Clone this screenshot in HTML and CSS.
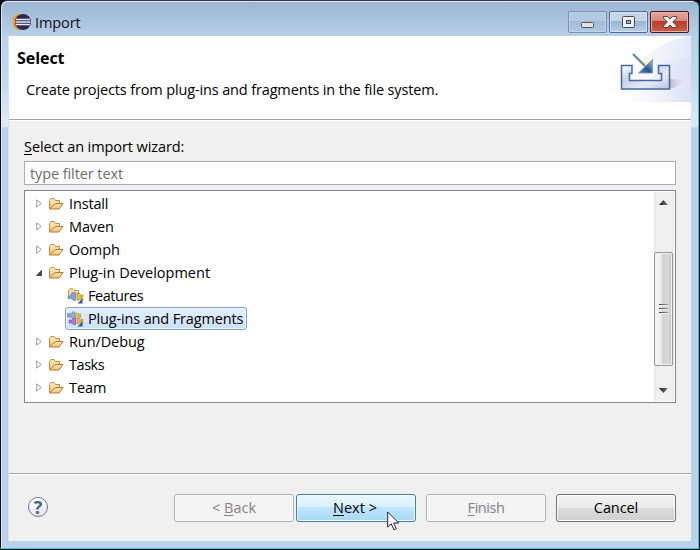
FILE: index.html
```
<!DOCTYPE html>
<html lang="en">
<head>
<meta charset="utf-8">
<title>Import</title>
<link rel="stylesheet" href="styles.css">
</head>
<body>
<svg class="defs" width="0" height="0" aria-hidden="true">
  <defs>
    <linearGradient id="gold" x1="0" y1="0" x2="0" y2="1"><stop offset="0" stop-color="#ffeec0"/><stop offset="1" stop-color="#eec173"/></linearGradient>
    <linearGradient id="paleBlue" x1="0" y1="0" x2="1" y2="0"><stop offset="0" stop-color="#fff"/><stop offset=".4" stop-color="#f8f9fd"/><stop offset="1" stop-color="#e2e8f7"/></linearGradient>
    <linearGradient id="paleBlue2" x1="0" y1="0" x2="1" y2="0"><stop offset="0" stop-color="#fff" stop-opacity="0"/><stop offset="1" stop-color="#d6def4"/></linearGradient>
    <linearGradient id="tray" x1="0" y1="0" x2="1" y2="1"><stop offset="0" stop-color="#fff"/><stop offset=".35" stop-color="#c8d2e8"/><stop offset=".65" stop-color="#e6eaf5"/><stop offset="1" stop-color="#b8c4df"/></linearGradient>
    <linearGradient id="shadow" x1="0" y1="0" x2="1" y2="0"><stop offset="0" stop-color="#c5b5cb"/><stop offset="1" stop-color="#dfe3f4" stop-opacity="0"/></linearGradient>
    <radialGradient id="glow"><stop offset="0" stop-color="#fff3a8"/><stop offset="1" stop-color="#fffbe0" stop-opacity=".2"/></radialGradient>
    <linearGradient id="head" x1="0" y1="1" x2="1" y2="0"><stop offset="0" stop-color="#5f86bd"/><stop offset=".45" stop-color="#2c5390"/><stop offset="1" stop-color="#a9c2e2"/></linearGradient>
    <linearGradient id="dark" x1="0" y1="0" x2="1" y2="0"><stop offset="0" stop-color="#111"/><stop offset="1" stop-color="#888"/></linearGradient>
    <symbol id="folder" viewBox="0 0 16 14">
      <path d="M1.500 11.500V3.500L3 1.500H6L7.500 3.500H11.500V6.500" fill="url(#gold)" stroke="#c48a3d"/>
      <path d="M1.500 12L5.500 8L8 6.500H15L11 12Z" fill="url(#gold)" stroke="#b9792d" stroke-linejoin="round"/>
    </symbol>
    <symbol id="closed" viewBox="0 0 6 9"><path d="M.7 .9L5.200 4.500L.7 8.100Z" fill="#fff" stroke="#999"/></symbol>
    <symbol id="open" viewBox="0 0 6 6"><path d="M5.700 .3V5.700H.3Z" fill="#444" stroke="#222" stroke-width=".6"/></symbol>
  </defs>
</svg>
<div class="window">
  <header class="titlebar">
    <svg class="logo" width="18" height="18" viewBox="0 0 18 18"><path d="M7 .8A8.200 8.200 0 0 0 7 17.200L9 15V3Z" fill="#f29a24"/><circle cx="10" cy="9" r="8" fill="#2d2757"/><path d="M3 6.500H17M2.500 9H17.500M3 11.500H17" stroke="#e9e9f4" stroke-width="1.500"/></svg>
    <span class="title">Import</span>
    <div class="controls">
      <div class="ctl minimize"><svg width="37" height="20"><rect x="12.500" y="10.500" width="12" height="5" rx="1" fill="#e3e3e3" stroke="#53575e"/></svg></div>
      <div class="ctl"><svg width="37" height="20"><rect x="12.500" y="4.500" width="12" height="11" rx="1" fill="#eee" stroke="#454b57"/><rect x="16.500" y="8.500" width="4" height="3" fill="#91a9c8" stroke="#454b57"/></svg></div>
      <div class="ctl close"><svg width="37" height="20"><path d="M12.500 4.500H16.500L19 7L21.500 4.500H25.500V6L21.800 10L25.500 14V15.500H21.500L19 13L16.500 15.500H12.500V14L16.200 10L12.500 6Z" fill="#f0f0f0" stroke="#54464b"/></svg></div>
    </div>
  </header>
  <main class="client">
    <section class="banner">
      <div class="copy">
        <h1>Select</h1>
        <p>Create projects from plug-ins and fragments in the file system.</p>
      </div>
      <svg class="art" width="75" height="66" viewBox="0 0 75 66">
        <path d="M0 66C13 31 37 5 75 0V66Z" fill="url(#paleBlue)"/>
        <path d="M0 66C20 38 49 22 75 21V66Z" fill="url(#paleBlue2)" opacity=".6"/>
        <circle cx="29" cy="28" r="8" fill="url(#glow)"/>
        <path d="M54 43L71 44L60 51L54 53Z" fill="url(#shadow)"/>
        <path d="M5.500 29.500H16V37.500H13.500V44.500H45.500V37.500H42.500V29.500H53.500V53H5.500Z" fill="url(#tray)" stroke="#4169a5" stroke-width="1.500"/>
        <path d="M17 18L29 30" stroke="#6585b6" stroke-width="2.200"/>
        <path d="M36.500 23.500V37H22.500Z" fill="url(#head)" stroke="#6f90c2" stroke-width=".8"/>
      </svg>
    </section>
    <section class="body">
      <label class="prompt"><u>S</u>elect an import wizard:</label>
      <div class="filter">type filter text</div>
      <div class="tree">
        <div class="rows">
          <div class="row"><svg class="arrow"><use href="#closed"/></svg><svg class="folder"><use href="#folder"/></svg><span class="snug">Install</span></div>
          <div class="row"><svg class="arrow"><use href="#closed"/></svg><svg class="folder"><use href="#folder"/></svg><span class="snug">Maven</span></div>
          <div class="row"><svg class="arrow"><use href="#closed"/></svg><svg class="folder"><use href="#folder"/></svg><span>Oomph</span></div>
          <div class="row"><svg class="arrow expanded"><use href="#open"/></svg><svg class="folder"><use href="#folder"/></svg><span class="wide">Plug-in Development</span></div>
          <div class="row child"><svg class="item" width="17" height="16" viewBox="0 0 17 16"><path d="M1.500 9.500V2.500L3 .7H5.500L7 2.500H11.500V7" fill="#f8dda1" stroke="#d09a50"/><path d="M1 8H4V6L6 4.500H8.500V12.500H7L4 10.500H1Z" fill="#7fa6d5" stroke="#5a81b8" stroke-width=".7"/><path d="M10 5.500H12.500L14 7H16V8.500H14V10H16V11.500H13L10 12.500Z" fill="#e8c03e" stroke="#a88328" stroke-width=".7"/><path d="M15.500 10.500V15.500H10.500Z" fill="#235b9d"/></svg><span class="tight">Features</span></div>
          <div class="row child"><div class="selected"><svg class="item" width="17" height="16" viewBox="0 0 17 16"><path d="M0 2.800H3.500L5.500 1H7.500V7.500H5.500L3.500 6H0V5H3V4H0Z" fill="#8badd8" stroke="#5b7eae" stroke-width=".6"/><path d="M8.500 2H10.500L12 3H14V4H12V5.300H14V6.300H11L8.500 7Z" fill="#edc345" stroke="#b28a21" stroke-width=".6"/><path d="M2 9H5L6.500 7.500H8.500V13.500H6.500L5 12H2V11H4V10H2Z" fill="#b179d2" stroke="#8b48ad" stroke-width=".7"/><path d="M10 7.500H13L14 8.500H16V9.500H14V11H16V12H12.500L10 13Z" fill="#e9bc3b" stroke="#a88328" stroke-width=".6"/><path d="M15.500 10.500V15.500H10.500Z" fill="#235b9d"/></svg><span class="snug">Plug-ins and Fragments</span></div></div>
          <div class="row"><svg class="arrow"><use href="#closed"/></svg><svg class="folder"><use href="#folder"/></svg><span>Run/Debug</span></div>
          <div class="row"><svg class="arrow"><use href="#closed"/></svg><svg class="folder"><use href="#folder"/></svg><span class="tight">Tasks</span></div>
          <div class="row"><svg class="arrow"><use href="#closed"/></svg><svg class="folder"><use href="#folder"/></svg><span>Team</span></div>
        </div>
        <div class="scrollbar">
          <svg width="9" height="5"><path d="M0 5L4.500 0L9 5Z" fill="url(#dark)"/></svg>
          <div class="thumb"><i></i><i></i><i></i></div>
          <svg width="9" height="5"><path d="M0 0L4.500 5L9 0Z" fill="url(#dark)"/></svg>
        </div>
      </div>
    </section>
    <footer class="actions">
      <div class="help">?</div>
      <div class="btn disabled"><span class="wide">&lt; <u>B</u>ack</span></div>
      <div class="btn next"><span class="wide"><u>N</u>ext &gt;</span>
        <svg class="cursor" width="13" height="20" viewBox="0 0 13 20"><path d="M.7 1V16L4.200 12.800L7 18.800L9.300 17.700L6.700 12H11.700Z" fill="#fff" stroke="#1d2033"/></svg>
      </div>
      <div class="btn disabled finish"><span class="tight"><u>F</u>inish</span></div>
      <div class="btn cancel"><span>Cancel</span></div>
    </footer>
  </main>
</div>
</body>
</html>
```
FILE: styles.css
```
* { box-sizing: border-box; }
body { margin: 0; background: #000; font: 14.5px/20px "Open Sans", "Noto Sans", sans-serif; letter-spacing: -0.09px; color: #000; overflow: hidden; }
svg { display: block; flex: none; }
.defs { position: absolute; }
u { text-decoration-thickness: 1px; text-underline-offset: 2px; }
span { white-space: nowrap; }
.wide { letter-spacing: 0; }
.snug { letter-spacing: -0.15px; }
.tight { letter-spacing: -0.45px; }

.window { width: 699px; height: 549px; padding: 0 7px 7px; border: 1px solid #25d0e8; border-top-color: #35353b; border-left-color: #111; border-radius: 7px 7px 0 0; background: linear-gradient(#9ab4d2, #b9d1ea 36px, #c1d8ef 75px, #dfeaf7 125px, #b9d1ea 127px); box-shadow: inset 1px 1px #ddebf8; }
.titlebar { height: 35px; display: flex; align-items: flex-start; padding-left: 5px; }
.logo { margin-top: 12px; }
.title { margin: 12px 0 0 4px; color: #111; }
.controls { display: flex; gap: 2px; margin: 10px 2px 0 auto; }
.ctl { width: 39px; height: 22px; border: 1px solid #526f90; border-radius: 2px; background: linear-gradient(#c3d5e8 45%, #98b3d0 45%, #b7d0e8); box-shadow: inset 0 0 0 1px #d5e3f2; }
.minimize { border-color: #7791ae; background: linear-gradient(#b3c9e1 45%, #a0bad6 45%, #b0c9e3); box-shadow: inset 0 0 0 1px #bfd2e7; }
.close { border-color: #4a1620; background: linear-gradient(#e6a99e, #d88478 45%, #b73c25 45%, #c8614b); box-shadow: inset 0 0 0 1px #e9b0a5; }

.client { width: 683px; height: 505px; display: flex; flex-direction: column; background: #f0f0f0; border-left: 1px solid #d3e2f2; }
.banner { height: 84px; flex: none; background: #fff; border-bottom: 1px solid #a0a0a0; display: flex; justify-content: space-between; }
.copy { padding: 12px 0 0 8px; }
h1 { margin: 0; font-size: 16px; line-height: 20px; letter-spacing: -0.05px; }
p { margin: 12px 0 0 9px; letter-spacing: -0.14px; }
.body { height: 353px; flex: none; border-top: 1px solid #fff; padding: 16px 15px 0; }
.prompt { display: block; height: 24px; }
.filter { height: 24px; border: 1px solid #abadb3; background: #fff; padding: 2px 5px 0; color: #6d6d6d; }
.tree { height: 213px; margin-top: 5px; border: 1px solid #828790; background: #fff; display: flex; justify-content: space-between; padding: 1px; }
.row { height: 23px; display: flex; align-items: center; padding-left: 10px; }
.arrow { width: 6px; height: 9px; margin-right: 6px; }
.arrow.expanded { height: 6px; }
.folder { width: 16px; height: 14px; margin-right: 5px; }
.child { padding-left: 41px; }
.item { margin-right: 4px; }
.selected { display: flex; align-items: center; width: 182px; height: 23px; margin-left: -2px; padding-left: 1px; border: 1px solid #7da2ce; border-radius: 3px; background: linear-gradient(#e3effd, #cce1fd); box-shadow: inset 0 0 0 1px #edf5fe; }
.scrollbar { width: 20px; display: flex; flex-direction: column; align-items: center; padding: 8px 0; background: linear-gradient(90deg, #e5e5e5, #f0f0f0 3px 17px, #e9e9e9); }
.scrollbar svg { margin-right: 2px; }
.thumb { width: 19px; height: 114px; margin: 47px 1px 0 0; border: 1px solid #979797; border-radius: 2px; background: linear-gradient(90deg, #f6f6f6, #ececec 38%, #d3d3d6 42%, #d8d8da 80%, #c1c1c7); box-shadow: inset 0 0 0 1px #f1f1f1; display: flex; flex-direction: column; justify-content: center; align-items: center; gap: 2px; }
.thumb i { width: 9px; height: 2px; background: linear-gradient(90deg, #444, #999); border-bottom: 1px solid #eee; }
.scrollbar svg:last-child { margin-top: auto; }

.actions { height: 68px; border-top: 1px solid #a0a0a0; box-shadow: inset 0 1px #fff; display: flex; align-items: flex-start; padding: 20px 15px 0 19px; }
.help { width: 20px; height: 20px; margin: 3px 126px 0 0; border: 1px solid #66789b; border-radius: 50%; background: linear-gradient(#fff, #e7e7ed); color: #4e6085; text-align: center; font-size: 18px; font-weight: 700; line-height: 18px; }
.btn { position: relative; width: 120px; height: 28px; flex: none; border: 1px solid #707070; border-radius: 3px; display: flex; align-items: center; justify-content: center; background: linear-gradient(#f2f2f2, #ebebeb 50%, #dcdcdc 50%, #cfcfcf); box-shadow: inset 0 0 0 1px #fafafa; }
.disabled { color: #838383; border-color: #adb2b5; background: #f4f4f4; }
.next { margin-left: 2px; border-color: #3c7fb1; background: linear-gradient(#eaf6fd, #d9f0fc 48%, #bee6fd 48%, #a7d9f5); }
.next span { padding-right: 2px; }
.finish, .cancel { margin-left: 10px; }
.cursor { position: absolute; left: 90px; top: 16px; z-index: 2; }
```
